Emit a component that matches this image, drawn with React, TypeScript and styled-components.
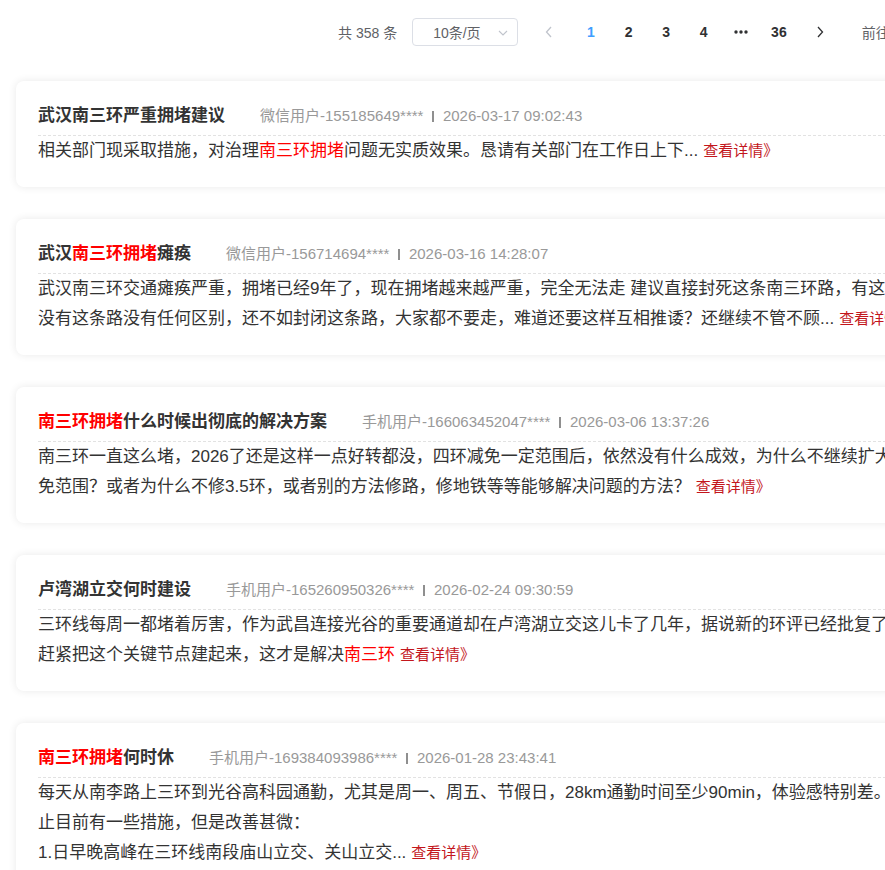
import React from "react";
import styled, { createGlobalStyle } from "styled-components";

const GlobalStyle = createGlobalStyle`
  html, body {
    margin: 0;
    padding: 0;
    background: #ffffff;
    overflow-x: hidden;
  }
  body {
    font-family: "Liberation Sans", Arial, "Noto Sans CJK SC", sans-serif;
    color: #333;
  }
`;

const Page = styled.div`
  width: 960px;
  padding: 18px 0 40px 16px;
`;

const Pager = styled.div`
  display: flex;
  align-items: center;
  height: 28px;
  padding-left: 322px;
  margin-bottom: 35px;
  font-size: 14px;
  color: #606266;
  white-space: nowrap;
`;

const Total = styled.span`
  margin-right: 15px;
`;

const SizeSelect = styled.div`
  position: relative;
  box-sizing: border-box;
  width: 106px;
  height: 28px;
  border: 1px solid #dcdfe6;
  border-radius: 4px;
  display: flex;
  align-items: center;
  padding-left: 20px;
  margin-right: 12px;
  color: #606266;
`;

const SelectArrow = styled.svg`
  position: absolute;
  right: 9px;
  top: 11px;
`;

const NavBtn = styled.button<{ $disabled?: boolean }>`
  width: 38px;
  height: 28px;
  border: 0;
  background: none;
  padding: 0;
  display: flex;
  align-items: center;
  justify-content: center;
  color: ${(p) => (p.$disabled ? "#c0c4cc" : "#303133")};
`;

const PageList = styled.ul`
  list-style: none;
  display: flex;
  margin: 0 3px 0 4px;
  padding: 0;
`;

const PageItem = styled.li<{ $active?: boolean }>`
  width: 37.6px;
  height: 28px;
  display: flex;
  align-items: center;
  justify-content: center;
  font-size: 14px;
  font-weight: 700;
  color: ${(p) => (p.$active ? "#409eff" : "#303133")};
`;

const Jumper = styled.span`
  margin-left: 23px;
`;

const List = styled.div`
  display: flex;
  flex-direction: column;
  gap: 32px;
`;

const Card = styled.article`
  width: 927px;
  box-sizing: border-box;
  padding: 23px 22px 21px 22px;
  background: #fff;
  border-radius: 8px;
  box-shadow: 0 0 9px rgba(0, 0, 0, 0.09);
`;

const Head = styled.div`
  display: flex;
  align-items: baseline;
  height: 24px;
  line-height: 24px;
  padding-bottom: 7px;
  border-bottom: 1px dashed #e2e2e2;
  white-space: nowrap;
`;

const Title = styled.h3`
  margin: 0;
  font-size: 17px;
  font-weight: 700;
  color: #333;
`;

const Meta = styled.span`
  margin-left: 35px;
  font-size: 15px;
  color: #999;
  display: inline-flex;
  align-items: center;
`;

const Sep = styled.i`
  display: inline-block;
  width: 1.5px;
  height: 11px;
  background: #8f8f8f;
  margin: 0 9px;
`;

const Body = styled.p`
  margin: 0;
  font-size: 17px;
  line-height: 30px;
  color: #333;
  white-space: pre-line;
`;

const Hot = styled.span`
  color: #ff0000;
`;

const More = styled.a`
  margin-left: 5px;
  font-size: 15px;
  color: #c3161c;
  text-decoration: none;
`;

type Piece = string | { hot: string };

interface Post {
  title: Piece[];
  user: string;
  time: string;
  body: Piece[];
}

const posts: Post[] = [
  {
    title: ["武汉南三环严重拥堵建议"],
    user: "微信用户-155185649****",
    time: "2026-03-17 09:02:43",
    body: [
      "相关部门现采取措施，对治理",
      { hot: "南三环拥堵" },
      "问题无实质效果。恳请有关部门在工作日上下...",
    ],
  },
  {
    title: ["武汉", { hot: "南三环拥堵" }, "瘫痪"],
    user: "微信用户-156714694****",
    time: "2026-03-16 14:28:07",
    body: [
      "武汉南三环交通瘫痪严重，拥堵已经9年了，现在拥堵越来越严重，完全无法走 建议直接封死这条南三环路，有这路和没有这条路没有任何区别，还不如封闭这条路，大家都不要走，难道还要这样互相推诿？还继续不管不顾...",
    ],
  },
  {
    title: [{ hot: "南三环拥堵" }, "什么时候出彻底的解决方案"],
    user: "手机用户-166063452047****",
    time: "2026-03-06 13:37:26",
    body: [
      "南三环一直这么堵，2026了还是这样一点好转都没，四环减免一定范围后，依然没有什么成效，为什么不继续扩大减免范围？或者为什么不修3.5环，或者别的方法修路，修地铁等等能够解决问题的方法？",
    ],
  },
  {
    title: ["卢湾湖立交何时建设"],
    user: "手机用户-165260950326****",
    time: "2026-02-24 09:30:59",
    body: [
      "三环线每周一都堵着厉害，作为武昌连接光谷的重要通道却在卢湾湖立交这儿卡了几年，据说新的环评已经批复了，赶紧把这个关键节点建起来，这才是解决",
      { hot: "南三环" },
    ],
  },
  {
    title: [{ hot: "南三环拥堵" }, "何时休"],
    user: "手机用户-169384093986****",
    time: "2026-01-28 23:43:41",
    body: [
      "每天从南李路上三环到光谷高科园通勤，尤其是周一、周五、节假日，28km通勤时间至少90min，体验感特别差。截止目前有一些措施，但是改善甚微：\n1.日早晚高峰在三环线南段庙山立交、关山立交...",
    ],
  },
];

const renderPieces = (pieces: Piece[]) =>
  pieces.map((p, i) =>
    typeof p === "string" ? (
      <React.Fragment key={i}>{p}</React.Fragment>
    ) : (
      <Hot key={i}>{p.hot}</Hot>
    )
  );

const Chevron = ({ dir }: { dir: "left" | "right" }) => (
  <svg width="8" height="12" viewBox="0 0 8 12" fill="none">
    <polyline
      points={dir === "left" ? "6,1 1.5,6 6,11" : "2,1 6.5,6 2,11"}
      stroke="currentColor"
      strokeWidth="1.3"
    />
  </svg>
);

const MoreDots = () => (
  <svg width="14" height="4" viewBox="0 0 14 4">
    <circle cx="2" cy="2" r="1.7" fill="#303133" />
    <circle cx="7" cy="2" r="1.7" fill="#303133" />
    <circle cx="12" cy="2" r="1.7" fill="#303133" />
  </svg>
);

export default function App() {
  return (
    <>
      <GlobalStyle />
      <Page>
        <Pager>
          <Total>共 358 条</Total>
          <SizeSelect>
            10条/页
            <SelectArrow width="10" height="6" viewBox="0 0 10 6" fill="none">
              <polyline points="1,1 5,5 9,1" stroke="#c0c4cc" strokeWidth="1.1" />
            </SelectArrow>
          </SizeSelect>
          <NavBtn $disabled>
            <Chevron dir="left" />
          </NavBtn>
          <PageList>
            <PageItem $active>1</PageItem>
            <PageItem>2</PageItem>
            <PageItem>3</PageItem>
            <PageItem>4</PageItem>
            <PageItem>
              <MoreDots />
            </PageItem>
            <PageItem>36</PageItem>
          </PageList>
          <NavBtn>
            <Chevron dir="right" />
          </NavBtn>
          <Jumper>前往</Jumper>
        </Pager>
        <List>
          {posts.map((post, i) => (
            <Card key={i}>
              <Head>
                <Title>{renderPieces(post.title)}</Title>
                <Meta>
                  {post.user}
                  <Sep />
                  {post.time}
                </Meta>
              </Head>
              <Body>
                {renderPieces(post.body)}
                <More href="#">查看详情》</More>
              </Body>
            </Card>
          ))}
        </List>
      </Page>
    </>
  );
}
